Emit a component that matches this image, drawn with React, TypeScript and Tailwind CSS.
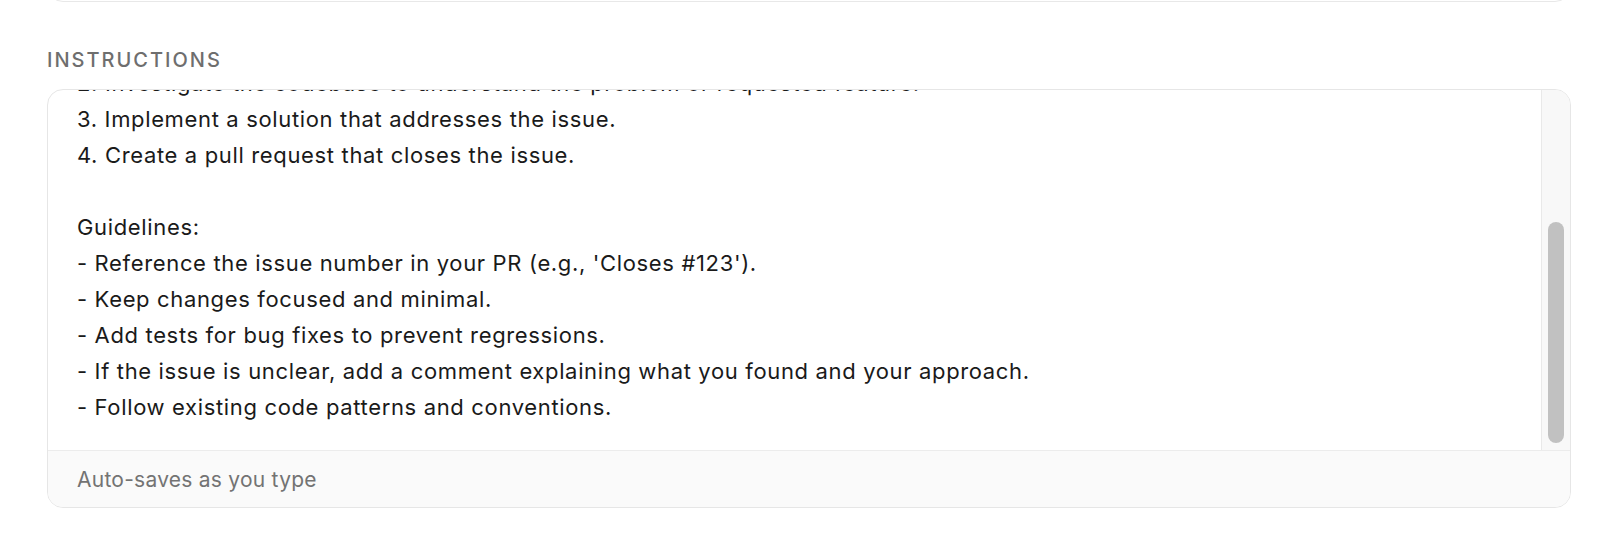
const lines = [
  "2. Investigate the codebase to understand the problem or requested feature.",
  "3. Implement a solution that addresses the issue.",
  "4. Create a pull request that closes the issue.",
  "",
  "Guidelines:",
  "- Reference the issue number in your PR (e.g., 'Closes #123').",
  "- Keep changes focused and minimal.",
  "- Add tests for bug fixes to prevent regressions.",
  "- If the issue is unclear, add a comment explaining what you found and your approach.",
  "- Follow existing code patterns and conventions.",
];

export default function App() {
  return (
    <div className="h-[560px] overflow-hidden bg-white font-['Inter','Liberation_Sans',sans-serif]">
      <div className="mx-[47px]">
        {/* previous card, mostly scrolled out of view */}
        <div className="-mt-[38px] h-[40px] rounded-b-2xl border border-[#e8e8e8]" />

        <p className="mt-[44px] h-[28px] text-[20px] leading-[28px] font-medium tracking-[0.1em] text-[#6e6e6e] uppercase">
          Instructions
        </p>

        <div className="mt-[15px] overflow-hidden rounded-2xl border border-[#e6e6e6]">
          <div className="flex h-[360px]">
            <div className="min-w-0 flex-1 overflow-hidden pl-[29px]">
              <div className="-mt-[25px] text-[22px] leading-[36px] tracking-[0.65px] whitespace-pre text-[#1a1a1a]">
                {lines.map((line, i) => (
                  <div key={i} className="h-[36px]">
                    {line}
                  </div>
                ))}
              </div>
            </div>
            <div className="flex w-[29px] flex-col items-center justify-end border-l border-[#e9e9e9] bg-[#f8f8f8] pb-[7px]">
              <div className="h-[221px] w-[16px] rounded-full bg-[#c1c1c1]" />
            </div>
          </div>
          <div className="flex h-[57px] items-center border-t border-[#ececec] bg-[#fafafa] pt-[2px] pl-[29px]">
            <span className="text-[21px] tracking-[0.25px] text-[#737373]">
              Auto-saves as you type
            </span>
          </div>
        </div>
      </div>
    </div>
  );
}
